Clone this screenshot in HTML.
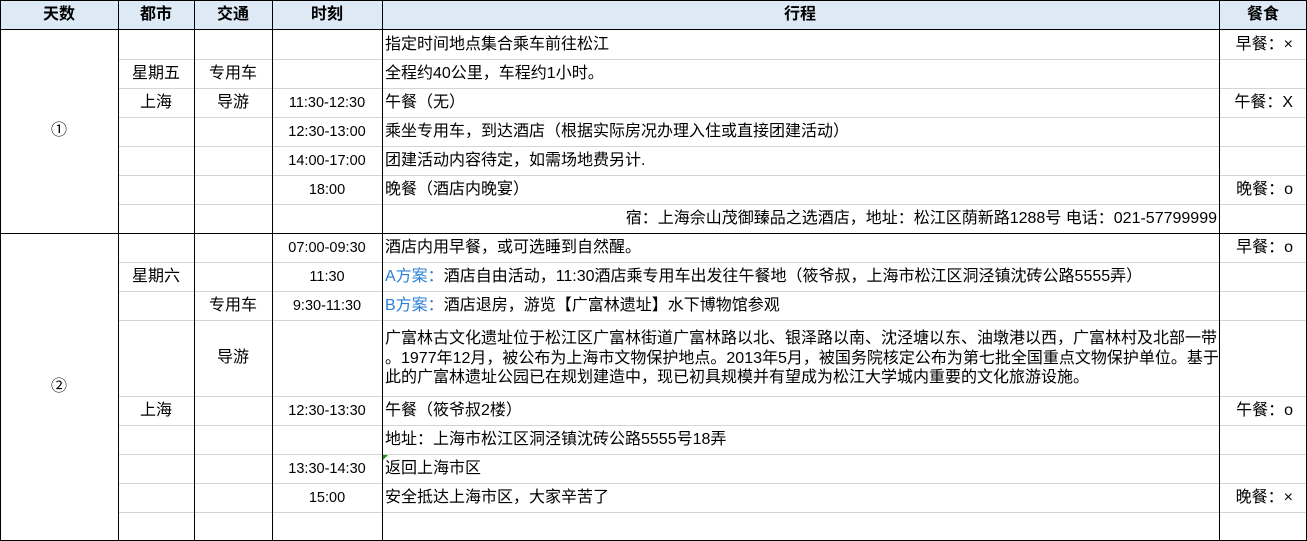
<!DOCTYPE html>
<html><head><meta charset="utf-8"><style>
body{margin:0;width:1307px;height:541px;background:#fff;position:relative;overflow:hidden;font-family:"Liberation Sans","Noto Sans CJK SC",sans-serif;font-size:16px;color:#000}
.h{position:absolute;top:0;left:0;width:1307px;height:30px;background:#dde9f5}
.l{position:absolute;background:#d4d4d4}
.v{position:absolute;width:1px;background:#000;top:0;height:541px}
.k{position:absolute;height:1px;background:#000}
.t{position:absolute;white-space:nowrap;line-height:18px}
.c{transform:translateX(-50%)}
.r{transform:translateX(-100%)}
.b{font-weight:bold;font-size:16px}
.a{color:#2b7fd6}
.m{font-size:14.5px}
</style></head><body>
<div class="h"></div>
<div class="l" style="left:118px;width:1188px;top:59px;height:1px"></div>
<div class="l" style="left:118px;width:1188px;top:88px;height:1px"></div>
<div class="l" style="left:118px;width:1188px;top:117px;height:1px"></div>
<div class="l" style="left:118px;width:1188px;top:146px;height:1px"></div>
<div class="l" style="left:118px;width:1188px;top:175px;height:1px"></div>
<div class="l" style="left:118px;width:1188px;top:204px;height:1px"></div>
<div class="l" style="left:118px;width:1188px;top:262px;height:1px"></div>
<div class="l" style="left:118px;width:1188px;top:291px;height:1px"></div>
<div class="l" style="left:118px;width:1188px;top:320px;height:1px"></div>
<div class="l" style="left:118px;width:1188px;top:396px;height:1px"></div>
<div class="l" style="left:118px;width:1188px;top:425px;height:1px"></div>
<div class="l" style="left:118px;width:1188px;top:454px;height:1px"></div>
<div class="l" style="left:118px;width:1188px;top:483px;height:1px"></div>
<div class="l" style="left:118px;width:1188px;top:512px;height:1px"></div>
<div class="k" style="left:0;width:1307px;top:0"></div>
<div class="k" style="left:0;width:1307px;top:29px"></div>
<div class="k" style="left:0;width:1307px;top:233px"></div>
<div class="k" style="left:0;width:1307px;top:540px"></div>
<div class="v" style="left:0"></div>
<div class="v" style="left:118px"></div>
<div class="v" style="left:194px"></div>
<div class="v" style="left:272px"></div>
<div class="v" style="left:382px"></div>
<div class="v" style="left:1219px"></div>
<div class="v" style="left:1306px"></div>
<div class="t b c" style="left:59px;top:6px">天数</div>
<div class="t b c" style="left:156px;top:6px">都市</div>
<div class="t b c" style="left:233px;top:6px">交通</div>
<div class="t b c" style="left:327px;top:6px">时刻</div>
<div class="t b c" style="left:800px;top:6px">行程</div>
<div class="t b c" style="left:1263px;top:6px">餐食</div>
<div class="t c" style="left:59px;top:122px">①</div>
<div class="t c" style="left:156px;top:65px">星期五</div>
<div class="t c" style="left:156px;top:94px">上海</div>
<div class="t c" style="left:233px;top:65px">专用车</div>
<div class="t c" style="left:233px;top:94px">导游</div>
<div class="t c m" style="left:327px;top:94px">11:30-12:30</div>
<div class="t c m" style="left:327px;top:123px">12:30-13:00</div>
<div class="t c m" style="left:327px;top:152px">14:00-17:00</div>
<div class="t c m" style="left:327px;top:181px">18:00</div>
<div class="t" style="left:385px;top:36px">指定时间地点集合乘车前往松江</div>
<div class="t" style="left:385px;top:65px">全程约40公里，车程约1小时。</div>
<div class="t" style="left:385px;top:94px">午餐（无）</div>
<div class="t" style="left:385px;top:123px">乘坐专用车，到达酒店（根据实际房况办理入住或直接团建活动）</div>
<div class="t" style="left:385px;top:152px">团建活动内容待定，如需场地费另计.</div>
<div class="t" style="left:385px;top:181px">晚餐（酒店内晚宴）</div>
<div class="t r" style="left:1217px;top:210px">宿：上海佘山茂御臻品之选酒店，地址：松江区荫新路1288号 电话：021-57799999</div>
<div class="t r" style="left:1293px;top:36px">早餐：×</div>
<div class="t r" style="left:1293px;top:94px">午餐：X</div>
<div class="t r" style="left:1293px;top:181px">晚餐：o</div>
<div class="t c" style="left:59px;top:378px">②</div>
<div class="t c" style="left:156px;top:268px">星期六</div>
<div class="t c" style="left:156px;top:402px">上海</div>
<div class="t c" style="left:233px;top:297px">专用车</div>
<div class="t c" style="left:233px;top:349px">导游</div>
<div class="t c m" style="left:327px;top:239px">07:00-09:30</div>
<div class="t c m" style="left:327px;top:268px">11:30</div>
<div class="t c m" style="left:327px;top:297px">9:30-11:30</div>
<div class="t c m" style="left:327px;top:402px">12:30-13:30</div>
<div class="t c m" style="left:327px;top:460px">13:30-14:30</div>
<div class="t c m" style="left:327px;top:489px">15:00</div>
<div class="t" style="left:385px;top:239px">酒店内用早餐，或可选睡到自然醒。</div>
<div class="t" style="left:385px;top:268px"><span class="a">A方案：</span>酒店自由活动，11:30酒店乘专用车出发往午餐地（筱爷叔，上海市松江区洞泾镇沈砖公路5555弄）</div>
<div class="t" style="left:385px;top:297px"><span class="a">B方案：</span>酒店退房，游览【广富林遗址】水下博物馆参观</div>
<div class="t" style="left:385px;top:329px;line-height:19.5px">广富林古文化遗址位于松江区广富林街道广富林路以北、银泽路以南、沈泾塘以东、油墩港以西，广富林村及北部一带<br>。1977年12月，被公布为上海市文物保护地点。2013年5月，被国务院核定公布为第七批全国重点文物保护单位。基于<br>此的广富林遗址公园已在规划建造中，现已初具规模并有望成为松江大学城内重要的文化旅游设施。</div>
<div class="t" style="left:385px;top:402px">午餐（筱爷叔2楼）</div>
<div class="t" style="left:385px;top:431px">地址：上海市松江区洞泾镇沈砖公路5555号18弄</div>
<div class="t" style="left:385px;top:460px">返回上海市区</div>
<div class="t" style="left:385px;top:489px">安全抵达上海市区，大家辛苦了</div>
<div style="position:absolute;left:383px;top:455px;width:0;height:0;border-top:5px solid #1a9a1a;border-right:5px solid transparent"></div>
<div class="t r" style="left:1293px;top:239px">早餐：o</div>
<div class="t r" style="left:1293px;top:402px">午餐：o</div>
<div class="t r" style="left:1293px;top:489px">晚餐：×</div>
</body></html>
